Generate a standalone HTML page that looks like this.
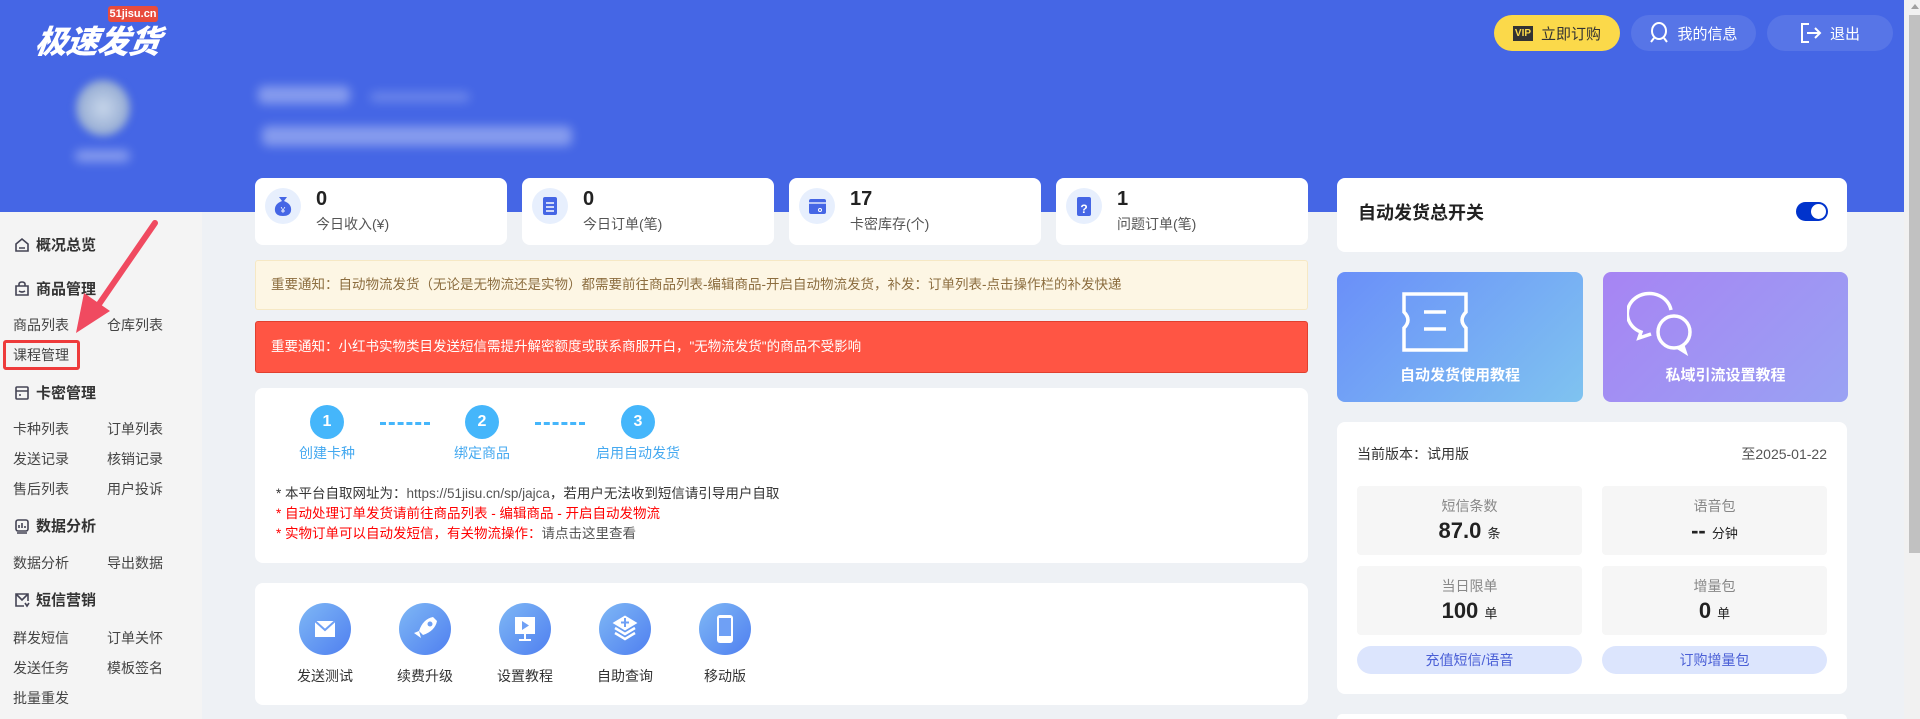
<!DOCTYPE html>
<html style="width:1920px;height:719px;overflow:hidden"><head><meta charset="utf-8"><style>
*{margin:0;padding:0;box-sizing:border-box}
body{width:1920px;height:719px;overflow:hidden;background:#eef1f5;font-family:"Liberation Sans","Noto Sans CJK SC",sans-serif;position:relative;color:#333}
.a{position:absolute}
.hdr{left:0;top:0;width:1904px;height:212px;background:#4566e5}
.btn{top:15px;height:36px;border-radius:18px;background:rgba(255,255,255,.1);color:#fff;font-size:15px;display:flex;align-items:center;justify-content:center;gap:8px}
.blur{background:rgba(255,255,255,.35);filter:blur(5px);border-radius:6px}
.side{left:0;top:212px;width:202px;height:507px;background:#f4f4f4}
.sh{font-size:15px;font-weight:bold;color:#333;display:flex;align-items:center;gap:6px;left:14px}
.si{font-size:14px;color:#444}
.card{background:#fff;border-radius:8px}
.stat .ic{position:absolute;left:10px;top:10px;width:36px;height:36px;border-radius:50%;background:#e7effd}
.stat .n{position:absolute;left:61px;top:10px;font-size:20px;font-weight:bold;color:#222}
.stat .l{position:absolute;left:61px;top:36px;font-size:14px;color:#555}
.step{width:34px;height:34px;border-radius:50%;background:#45b6fb;color:#fff;font-weight:bold;font-size:16px;text-align:center;line-height:34px}
.sl{font-size:14px;color:#45a9f0;text-align:center;width:120px}
.dash{height:0;border-top:3px dashed #45b6fb;width:50px}
.tool{width:52px;height:52px;border-radius:50%;background:linear-gradient(135deg,#7fb8f5,#4f7ff0)}
.tl{font-size:14px;color:#333;text-align:center;width:100px}
.gb{background:#f6f6f6;border-radius:4px;width:225px;height:69px;text-align:center}
.gb .t{font-size:14px;color:#888;margin-top:10px}
.gb .v{font-size:22px;font-weight:bold;color:#222;margin-top:2px}
.gb .v small{font-size:13px;font-weight:normal}
.pb{width:225px;height:28px;border-radius:14px;background:#dce5fd;color:#4a5fd6;font-size:14px;text-align:center;line-height:28px}
</style></head><body>
<div class="a hdr"></div>
<div class="a" style="left:108px;top:6px;width:50px;height:16px;background:#e84c3d;border-radius:3px;color:#fff;font-size:11px;font-weight:bold;text-align:center;line-height:16px">51jisu.cn</div>
<div class="a" style="left:36px;top:17px;color:#fff;font-size:32px;font-weight:900;font-style:italic;letter-spacing:-1px;transform:skewX(-8deg)">极速发货</div>
<div class="a" style="left:76px;top:80px;width:54px;height:56px;border-radius:50%;background:radial-gradient(#c7d6ea,#7d97c8);filter:blur(4px)"></div>
<div class="a blur" style="left:75px;top:150px;width:55px;height:12px"></div>
<div class="a blur" style="left:258px;top:86px;width:92px;height:18px"></div>
<div class="a blur" style="left:370px;top:92px;width:100px;height:10px;opacity:.6"></div>
<div class="a blur" style="left:262px;top:126px;width:310px;height:20px"></div>
<div class="a btn" style="left:1494px;width:126px;background:#fbd94a;color:#333"><span style="background:#333;color:#fbd94a;font-size:10px;font-weight:bold;padding:2px 2px">VIP</span>立即订购</div>
<div class="a btn" style="left:1631px;width:125px"><svg width="20" height="22" viewBox="0 0 20 22" fill="none" stroke="#fff" stroke-width="2"><ellipse cx="10" cy="9" rx="7" ry="8"/><path d="M5 16 L2 20 M15 16 L18 20"/></svg>我的信息</div>
<div class="a btn" style="left:1767px;width:126px"><svg width="22" height="22" viewBox="0 0 22 22" fill="none" stroke="#fff" stroke-width="2"><path d="M9 2H2V20H9M7 11H20M15 6L20 11L15 16"/></svg>退出</div>
<div class="a" style="left:1904px;top:0;width:16px;height:719px;background:#f1f1f1"></div>
<div class="a" style="left:1909px;top:15px;width:11px;height:538px;background:#c1c1c1"></div>
<div class="a" style="left:1911px;top:4px;width:0;height:0;border-left:4px solid transparent;border-right:4px solid transparent;border-bottom:5px solid #a0a0a0"></div>
<div class="a side"></div>
<div class="a sh" style="top:234px"><svg width="16" height="16" viewBox="0 0 16 16" fill="none" stroke="#445" stroke-width="1.6"><path d="M2 7L8 2L14 7V14H2Z M5 11H11"/></svg>概况总览</div>
<div class="a sh" style="top:278px"><svg width="16" height="16" viewBox="0 0 16 16" fill="none" stroke="#445" stroke-width="1.6"><path d="M2 5H14V14H2Z M5 5V3A3 2 0 0 1 11 3V5 M5 10Q8 12 11 10"/></svg>商品管理</div>
<div class="a si" style="left:13px;top:315px">商品列表</div><div class="a si" style="left:107px;top:315px">仓库列表</div>
<div class="a si" style="left:13px;top:345px">课程管理</div>
<div class="a" style="left:3px;top:340px;width:77px;height:30px;border:3px solid #ee3b3b;border-radius:3px"></div>
<div class="a sh" style="top:382px"><svg width="16" height="16" viewBox="0 0 16 16" fill="none" stroke="#445" stroke-width="1.6"><rect x="2" y="2" width="12" height="12" rx="1"/><path d="M2 6H14 M5 10H7"/></svg>卡密管理</div>
<div class="a si" style="left:13px;top:419px">卡种列表</div><div class="a si" style="left:107px;top:419px">订单列表</div>
<div class="a si" style="left:13px;top:449px">发送记录</div><div class="a si" style="left:107px;top:449px">核销记录</div>
<div class="a si" style="left:13px;top:479px">售后列表</div><div class="a si" style="left:107px;top:479px">用户投诉</div>
<div class="a sh" style="top:515px"><svg width="16" height="16" viewBox="0 0 16 16" fill="none" stroke="#445" stroke-width="1.6"><rect x="2" y="2" width="12" height="11" rx="2"/><path d="M5 10V7M8 10V5M11 10V8M3 15H13"/></svg>数据分析</div>
<div class="a si" style="left:13px;top:553px">数据分析</div><div class="a si" style="left:107px;top:553px">导出数据</div>
<div class="a sh" style="top:589px"><svg width="16" height="16" viewBox="0 0 16 16" fill="none" stroke="#445" stroke-width="1.6"><path d="M10 14H2V2H14V9 M2 2L8 8L14 2 M11 11L13 14L15 11"/></svg>短信营销</div>
<div class="a si" style="left:13px;top:628px">群发短信</div><div class="a si" style="left:107px;top:628px">订单关怀</div>
<div class="a si" style="left:13px;top:658px">发送任务</div><div class="a si" style="left:107px;top:658px">模板签名</div>
<div class="a si" style="left:13px;top:688px">批量重发</div>
<svg class="a" style="left:60px;top:215px" width="110" height="130" viewBox="0 0 110 130"><path d="M95 8 L35 95" stroke="#f04a60" stroke-width="6" stroke-linecap="round"/><path d="M16 118 L24 78 L50 96 Z" fill="#f04a60"/></svg>
<div class="a card stat" style="left:255px;top:178px;width:252px;height:67px"><div class="ic"><svg width="36" height="36" viewBox="0 0 36 36"><path d="M14 9H22L19 13Q27 16 26 23Q25 28 18 28Q11 28 10 23Q9 16 17 13Z" fill="#4566e5"/><text x="18" y="25" font-size="8" fill="#fff" text-anchor="middle">¥</text></svg></div><div class="n">0</div><div class="l">今日收入(¥)</div></div>
<div class="a card stat" style="left:522px;top:178px;width:252px;height:67px"><div class="ic"><svg width="36" height="36" viewBox="0 0 36 36"><rect x="11" y="9" width="14" height="18" rx="2" fill="#4566e5"/><path d="M14 15H22M14 19H22M14 23H22" stroke="#fff" stroke-width="1.5"/></svg></div><div class="n">0</div><div class="l">今日订单(笔)</div></div>
<div class="a card stat" style="left:789px;top:178px;width:252px;height:67px"><div class="ic"><svg width="36" height="36" viewBox="0 0 36 36"><rect x="10" y="11" width="17" height="15" rx="2" fill="#4566e5"/><path d="M10 15H27" stroke="#fff" stroke-width="1.2"/><circle cx="21" cy="22" r="1.5" fill="none" stroke="#fff"/></svg></div><div class="n">17</div><div class="l">卡密库存(个)</div></div>
<div class="a card stat" style="left:1056px;top:178px;width:252px;height:67px"><div class="ic"><svg width="36" height="36" viewBox="0 0 36 36"><rect x="11" y="9" width="14" height="19" rx="2" fill="#4566e5"/><text x="18" y="25" font-size="12" fill="#fff" text-anchor="middle" font-weight="bold">?</text></svg></div><div class="n">1</div><div class="l">问题订单(笔)</div></div>
<div class="a" style="left:255px;top:260px;width:1053px;height:50px;background:#fdf6e4;border:1px solid #f6e8c4;border-radius:3px;font-size:13.5px;color:#8c6d3f;line-height:48px;padding-left:15px">重要通知：自动物流发货（无论是无物流还是实物）都需要前往商品列表-编辑商品-开启自动物流发货，补发：订单列表-点击操作栏的补发快递</div>
<div class="a" style="left:255px;top:321px;width:1053px;height:52px;background:#ff5544;border:1px solid #e0402f;border-radius:3px;font-size:13.5px;color:#fff;line-height:50px;padding-left:15px">重要通知：小红书实物类目发送短信需提升解密额度或联系商服开白，"无物流发货"的商品不受影响</div>
<div class="a card" style="left:255px;top:388px;width:1053px;height:175px"></div>
<div class="a step" style="left:310px;top:405px">1</div>
<div class="a step" style="left:465px;top:405px">2</div>
<div class="a step" style="left:621px;top:405px">3</div>
<div class="a dash" style="left:380px;top:422px"></div>
<div class="a dash" style="left:535px;top:422px"></div>
<div class="a sl" style="left:267px;top:443px">创建卡种</div>
<div class="a sl" style="left:422px;top:443px">绑定商品</div>
<div class="a sl" style="left:578px;top:443px">启用自动发货</div>
<div class="a" style="left:276px;top:482px;font-size:13.5px;color:#333">* 本平台自取网址为：<span style="color:#555">https://51jisu.cn/sp/jajca</span>，若用户无法收到短信请引导用户自取</div>
<div class="a" style="left:276px;top:502px;font-size:13.5px;color:#f00">* 自动处理订单发货请前往商品列表 - 编辑商品 - 开启自动发物流</div>
<div class="a" style="left:276px;top:522px;font-size:13.5px;color:#f00">* 实物订单可以自动发短信，有关物流操作：<span style="color:#555">请点击这里查看</span></div>
<div class="a card" style="left:255px;top:583px;width:1053px;height:122px"></div>
<div class="a tool" style="left:299px;top:603px"><svg width="52" height="52" viewBox="0 0 52 52"><path d="M16 18H36V34H16Z" fill="#fff"/><path d="M16 18L26 27L36 18" fill="none" stroke="#6fa0f5" stroke-width="2"/></svg></div>
<div class="a tool" style="left:399px;top:603px"><svg width="52" height="52" viewBox="0 0 52 52"><path d="M34 14Q24 16 20 28L24 32Q36 28 38 18Z M20 28L15 30L22 35Z" fill="#fff"/><circle cx="31" cy="21" r="2.5" fill="#6fa0f5"/></svg></div>
<div class="a tool" style="left:499px;top:603px"><svg width="52" height="52" viewBox="0 0 52 52"><rect x="16" y="14" width="20" height="17" fill="#fff"/><path d="M23 18V27L30 22.5Z" fill="#6fa0f5"/><path d="M26 31V37M20 37H32" stroke="#fff" stroke-width="2"/></svg></div>
<div class="a tool" style="left:599px;top:603px"><svg width="52" height="52" viewBox="0 0 52 52" fill="none" stroke="#fff" stroke-width="2.5"><path d="M16 25L26 31L36 25M16 30L26 36L36 30"/><path d="M16 20L26 14L36 20L26 26Z" fill="#fff"/><path d="M26 15V24M22 19.5H30" stroke="#6fa0f5" stroke-width="2"/></svg></div>
<div class="a tool" style="left:699px;top:603px"><svg width="52" height="52" viewBox="0 0 52 52"><rect x="18" y="12" width="16" height="28" rx="3" fill="#fff"/><rect x="20" y="15" width="12" height="18" fill="#6fa0f5"/></svg></div>
<div class="a tl" style="left:275px;top:666px">发送测试</div>
<div class="a tl" style="left:375px;top:666px">续费升级</div>
<div class="a tl" style="left:475px;top:666px">设置教程</div>
<div class="a tl" style="left:575px;top:666px">自助查询</div>
<div class="a tl" style="left:675px;top:666px">移动版</div>
<div class="a card" style="left:1337px;top:178px;width:510px;height:74px"></div>
<div class="a" style="left:1358px;top:199px;font-size:18px;font-weight:bold;color:#222">自动发货总开关</div>
<div class="a" style="left:1796px;top:202px;width:32px;height:19px;border-radius:10px;background:#0033cc"><div style="position:absolute;right:2px;top:2px;width:15px;height:15px;border-radius:50%;background:#fff"></div></div>
<div class="a" style="left:1337px;top:272px;width:246px;height:130px;border-radius:8px;background:linear-gradient(135deg,#6a8ff9,#7fc3f0)"></div>
<div class="a" style="left:1603px;top:272px;width:245px;height:130px;border-radius:8px;background:linear-gradient(135deg,#a784f3,#99a2f3)"></div>
<svg class="a" style="left:1400px;top:290px" width="70" height="65" viewBox="0 0 70 65" fill="none" stroke="#fff" stroke-width="3.5"><path d="M4 4H66V22Q58 30 66 38V60H4V38Q12 30 4 22Z"/><path d="M24 22H46M24 39H46"/></svg>
<svg class="a" style="left:1627px;top:290px" width="70" height="66" viewBox="0 0 70 66" fill="none" stroke="#fff" stroke-width="3.5"><path d="M44 20A22 20 0 1 0 14 42L12 48L24 44"/><circle cx="47" cy="42" r="16"/><path d="M56 56L58 62L50 57"/></svg>
<div class="a" style="left:1337px;top:364px;width:246px;text-align:center;color:#fff;font-size:15px;font-weight:bold">自动发货使用教程</div>
<div class="a" style="left:1603px;top:364px;width:245px;text-align:center;color:#fff;font-size:15px;font-weight:bold">私域引流设置教程</div>
<div class="a card" style="left:1337px;top:422px;width:510px;height:272px"></div>
<div class="a" style="left:1357px;top:444px;font-size:14px;color:#333">当前版本：试用版</div>
<div class="a" style="left:1700px;top:444px;width:127px;text-align:right;font-size:14px;color:#555">至2025-01-22</div>
<div class="a gb" style="left:1357px;top:486px"><div class="t">短信条数</div><div class="v">87.0 <small>条</small></div></div>
<div class="a gb" style="left:1602px;top:486px"><div class="t">语音包</div><div class="v">-- <small>分钟</small></div></div>
<div class="a gb" style="left:1357px;top:566px"><div class="t">当日限单</div><div class="v">100 <small>单</small></div></div>
<div class="a gb" style="left:1602px;top:566px"><div class="t">增量包</div><div class="v">0 <small>单</small></div></div>
<div class="a pb" style="left:1357px;top:646px">充值短信/语音</div>
<div class="a pb" style="left:1602px;top:646px">订购增量包</div>
<div class="a card" style="left:1337px;top:714px;width:510px;height:5px;border-radius:8px 8px 0 0"></div>
</body></html>
